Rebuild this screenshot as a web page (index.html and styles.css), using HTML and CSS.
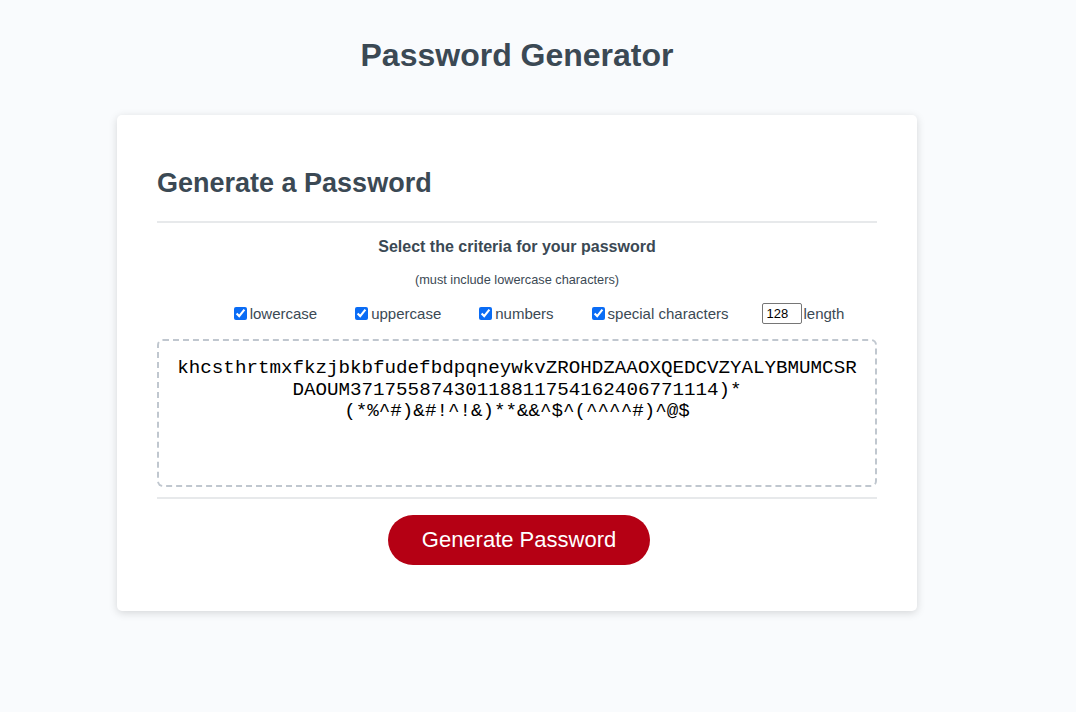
FILE: index.html
```html
<!DOCTYPE html>
<html lang="en">
<head>
<meta charset="UTF-8">
<title>Password Generator</title>
<link rel="stylesheet" href="styles.css">
</head>
<body>
<div class="wrapper">
  <header class="page-header">
    <h1 class="page-title">Password Generator</h1>
  </header>
  <div class="card">
    <div class="card-header">
      <h2 class="card-title">Generate a Password</h2>
    </div>
    <div class="card-body">
      <h5 class="criteria-title">Select the criteria for your password</h5>
      <p class="criteria-note">(must include lowercase characters)</p>
      <div class="criteria-row">
        <div class="criterion"><input type="checkbox" class="cb" checked><label class="cb-label">lowercase</label></div>
        <div class="criterion"><input type="checkbox" class="cb" checked><label class="cb-label">uppercase</label></div>
        <div class="criterion"><input type="checkbox" class="cb" checked><label class="cb-label">numbers</label></div>
        <div class="criterion"><input type="checkbox" class="cb" checked><label class="cb-label">special characters</label></div>
        <div class="criterion"><input type="number" class="length-input" value="128"><label class="len-label">length</label></div>
      </div>
      <div class="password-box">khcsthrtmxfkzjbkbfudefbdpqneywkvZROHDZAAOXQEDCVZYALYBMUMCSR<br>DAOUM37175587430118811754162406771114)*<br>(*%^#)&amp;#!^!&amp;)**&amp;&amp;^$^(^^^^#)^@$</div>
    </div>
    <div class="card-footer">
      <button class="btn">Generate Password</button>
    </div>
  </div>
</div>
</body>
</html>
```

FILE: styles.css
```css
*, *::before, *::after { box-sizing: border-box; }

body {
  margin: 0;
  padding: 0;
  background-color: #f9fbfd;
  font-family: "Liberation Sans", Arial, Helvetica, sans-serif;
}

.wrapper {
  padding: 30px 62px 40px 20px;
}

.page-header {
  text-align: center;
  color: #3b4954;
  padding: 0 20px;
}

.page-title {
  font-size: 32px;
  font-weight: bold;
  line-height: 37px;
  margin: 7px 0 41px;
}

.card {
  background-color: #fff;
  border-radius: 5px;
  box-shadow: rgba(0, 0, 0, 0.15) 0 2px 8px 0;
  color: #3b4954;
  font-size: 18px;
  margin: 0 auto;
  max-width: 800px;
  padding: 30px 40px;
}

.card-title {
  font-size: 27px;
  font-weight: bold;
  line-height: 31px;
  margin: 23px 0 22px;
}

.card-header::after {
  content: "";
  display: block;
  width: 100%;
  height: 2px;
  background: #e7e9eb;
}

.card-body {
  display: flex;
  flex-direction: column;
  align-items: stretch;
}

.criteria-title {
  font-size: 16px;
  font-weight: bold;
  line-height: 18px;
  text-align: center;
  margin: 15px 0 0;
}

.criteria-note {
  font-size: 12.75px;
  line-height: 15px;
  text-align: center;
  margin: 16px 0 0;
}

.criteria-row {
  display: flex;
  justify-content: center;
  align-items: center;
  gap: 34px;
  height: 21px;
  margin-top: 16px;
  padding-left: 40px;
  font-size: 15px;
}

.criterion {
  display: flex;
  align-items: center;
}

.cb {
  width: 13px;
  height: 13px;
  margin: 0 3px 0 4px;
  accent-color: #0a6cf5;
}

.cb-label, .len-label {
  line-height: 17px;
}

.length-input {
  width: 40px;
  height: 21px;
  margin: 0 1px 0 0;
  padding: 1px 3px;
  font-family: "Liberation Sans", Arial, sans-serif;
  font-size: 13px;
  color: #000;
  border: 1px solid #767676;
  border-radius: 2px;
  -moz-appearance: textfield;
  appearance: textfield;
}

.length-input::-webkit-inner-spin-button,
.length-input::-webkit-outer-spin-button {
  -webkit-appearance: none;
  margin: 0;
}

.password-box {
  margin: 15px 0 10px;
  height: 148px;
  padding: 17px 15px 0;
  border: 2px dashed #c0c7cf;
  border-radius: 6px;
  overflow: hidden;
  font-family: "Liberation Mono", "Courier New", monospace;
  font-size: 19.2px;
  line-height: 21.7px;
  color: #000;
  text-align: center;
  background: #fff;
}

.card-footer {
  text-align: center;
}

.card-footer::before {
  content: "";
  display: block;
  width: 100%;
  height: 2px;
  background: #e7e9eb;
}

.btn {
  border: none;
  background-color: #b50014;
  border-radius: 25px;
  color: #fff;
  display: inline-block;
  font-family: "Liberation Sans", Arial, sans-serif;
  font-size: 22px;
  line-height: 22px;
  margin: 16px 16px 16px 20px;
  padding: 14px 34px;
  text-align: center;
  cursor: pointer;
  vertical-align: top;
}
```
